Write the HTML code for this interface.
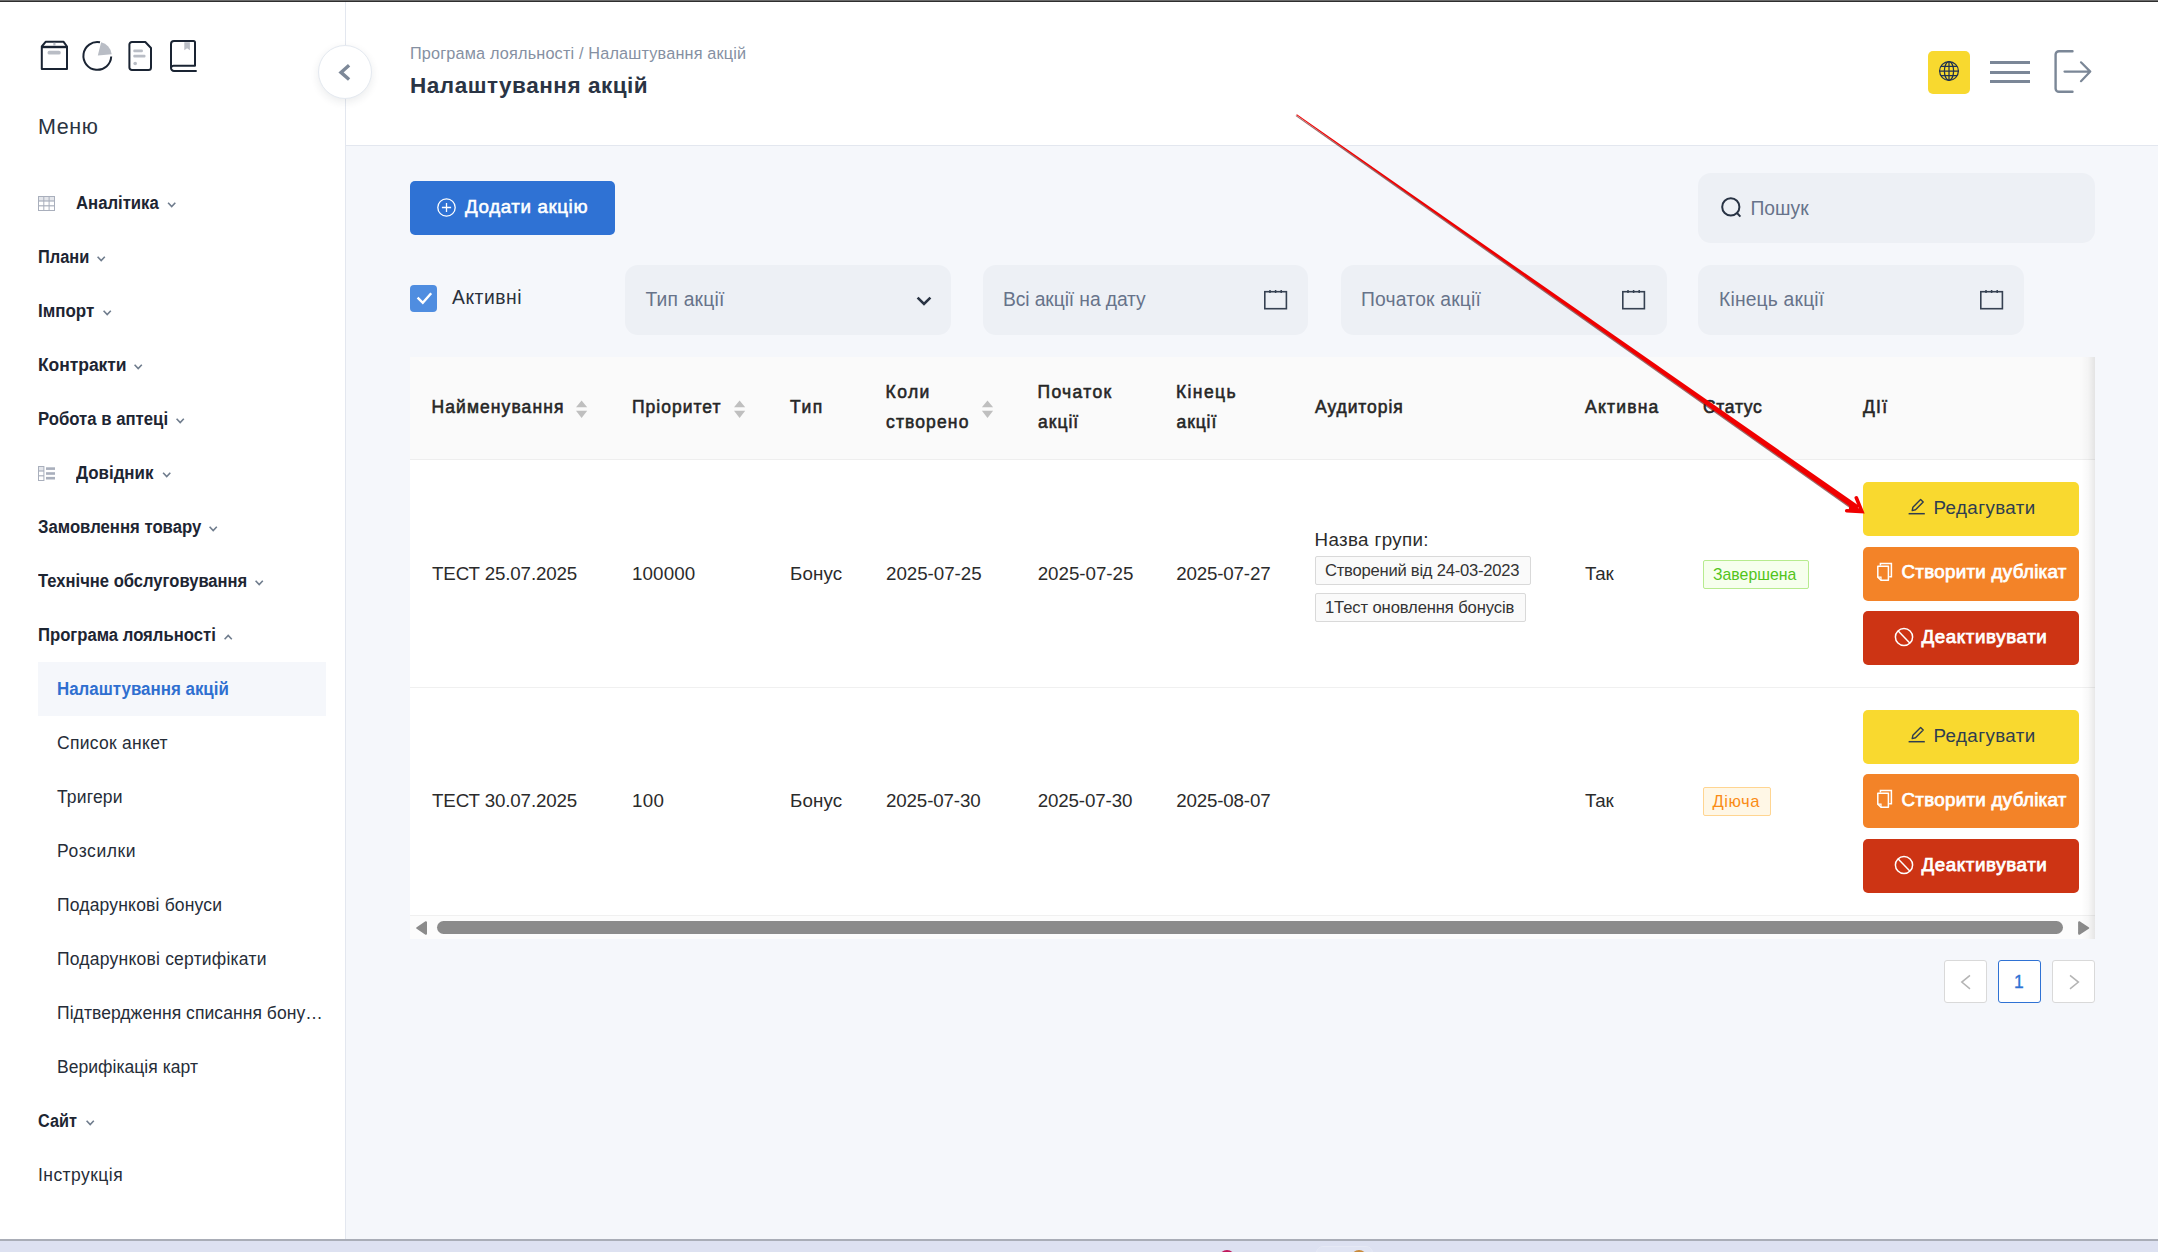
<!DOCTYPE html>
<html lang="uk">
<head>
<meta charset="utf-8">
<title>Налаштування акцій</title>
<style>
*{box-sizing:border-box;margin:0;padding:0}
html,body{width:2158px;height:1252px;overflow:hidden;background:#f5f7fb;font-family:"Liberation Sans","DejaVu Sans",sans-serif;color:#1f2733}
body{position:relative}
.abs{position:absolute}
.t{position:absolute;white-space:nowrap;line-height:1}
#topline{left:0;top:0;width:2158px;height:2px;background:linear-gradient(#6a6a6a 0,#6a6a6a 50%,#2e2e2e 50%,#2e2e2e 100%)}
#sidebar{left:0;top:2px;width:346px;height:1237px;background:#fff;border-right:1px solid #e3e7ef}
#header{left:346px;top:2px;width:1812px;height:144px;background:#fff;border-bottom:1px solid #e3e7ef}
#taskbar{left:0;top:1239px;width:2158px;height:13px;background:#dde1f1;border-top:2px solid #a9adb7;overflow:hidden}
.m{font-weight:bold;font-size:17px;color:#1f2733}
.s{font-size:17px;color:#2a313c}
#active{left:38px;top:662px;width:288px;height:54px;background:#f5f7fb}
.btn{position:absolute;border-radius:5px}
.fld{position:absolute;background:#edf0f5;border-radius:13px}
.ph{font-size:18px;color:#68717f}
#table{left:410px;top:357px;width:1685px;height:581.7px;background:#fff}
#thead{left:0;top:0;width:1685px;height:103px;background:#fafafa;border-bottom:1px solid #eeeeee}
.th{font-weight:bold;font-size:17px;color:#222a35}
.td{font-size:18px;color:#2a2f36}
.tag{position:absolute;border:1px solid #d9d9d9;background:#fafafa;border-radius:2px;height:28px}
.tag span{position:absolute;left:10px;top:5px;font-size:15px;white-space:nowrap;line-height:1;color:#33383f}
.pg{position:absolute;width:43px;height:43px;top:960px;background:#fff;border:1px solid #d9d9d9;border-radius:3px}
</style>
</head>
<body>
<div class="abs" id="sidebar"></div>
<div class="abs" id="header"></div>
<div class="abs" id="topline"></div>
<div class="abs" id="taskbar"><div class="abs" style="left:1316px;top:4.5px;width:57px;height:30px;border-radius:7px;border:1px solid #e6e9f5;background:#e0e4f3"></div><div class="abs" style="left:1219px;top:8.6px;width:16px;height:16px;border-radius:50%;background:#c2185b"></div><div class="abs" style="left:1351px;top:8.6px;width:16px;height:16px;border-radius:50%;background:#c98a3a"></div></div>

<!-- SIDEBAR -->
<div id="sb">
<div class="abs" id="active"></div>
</div>

<!-- HEADER -->
<div id="hd">
</div>

<!-- TOOLBAR -->
<div id="tb">
<div class="btn" style="left:410px;top:181px;width:205px;height:54px;background:#2f72d4"></div>
<div class="fld" style="left:1698px;top:173px;width:397px;height:70px"></div>
<div class="fld" style="left:625px;top:265px;width:325.5px;height:70px"></div>
<div class="fld" style="left:983px;top:265px;width:325px;height:70px"></div>
<div class="fld" style="left:1341px;top:265px;width:325.5px;height:70px"></div>
<div class="fld" style="left:1698px;top:265px;width:326px;height:70px"></div>
</div>

<!-- TABLE -->
<div class="abs" id="table">
<div class="abs" id="thead"></div>
</div>


<!-- SIDEBAR ICONS -->
<svg class="abs" style="left:36px;top:36px" width="170" height="42" viewBox="36 36 170 42" fill="none">
 <!-- box -->
 <g stroke="#1a2433" stroke-width="2" stroke-linejoin="round">
  <path d="M41.8 46.5 L45.6 41.8 H63.6 L67 46.5 V69 H41.8 Z"/>
  <path d="M41.8 47 H67" stroke-width="2.4"/>
 </g>
 <rect x="47.5" y="50.8" width="13.3" height="3.8" rx="1.9" fill="#b9bdc5"/>
 <rect x="53.3" y="42.8" width="2.2" height="3.2" fill="#b9bdc5"/>
 <!-- pie -->
 <path d="M100 42.3 A13.9 13.9 0 1 0 111.2 56.5" stroke="#1a2433" stroke-width="2" stroke-linecap="butt"/>
 <path d="M97.8 55.6 L101.1 42.3 A14 14 0 0 1 111.7 54.2 Z" fill="#b9bdc5"/>
 <!-- doc -->
 <path d="M132 42 H145.3 L151 48 V67.5 A2.5 2.5 0 0 1 148.5 70 H132 A2.5 2.5 0 0 1 129.4 67.5 V44.5 A2.5 2.5 0 0 1 132 42 Z" stroke="#1a2433" stroke-width="2" stroke-linejoin="round"/>
 <rect x="133.3" y="49.6" width="9.6" height="2.6" rx="1" fill="#b9bdc5"/>
 <rect x="133.3" y="54.8" width="12.2" height="2.6" rx="1" fill="#b9bdc5"/>
 <circle cx="135.2" cy="63.5" r="1.8" fill="#b9bdc5"/>
 <!-- book -->
 <path d="M196.7 70.9 H174 A3 3 0 0 1 171 67.9 V44 A3 3 0 0 1 174 41 H193.5 A1.5 1.5 0 0 1 195 42.5 V65.8 H174 A2.6 2.6 0 0 0 171 68" stroke="#1a2433" stroke-width="2" stroke-linejoin="round"/>
 <path d="M184.3 42.3 H189.9 V50.3 L187.1 48.3 L184.3 50.3 Z" fill="#b9bdc5"/>
</svg>

<!-- menu small icons -->
<svg class="abs" style="left:38px;top:196px" width="17" height="15" viewBox="0 0 17 15">
 <rect x="0" y="0" width="17" height="15" fill="#a9afbc"/>
 <g fill="#e4e6eb"><rect x="1" y="1" width="4.3" height="3.4"/><rect x="6.3" y="1" width="4.3" height="3.4"/><rect x="11.6" y="1" width="4.4" height="3.4"/></g>
 <g fill="#fff"><rect x="1" y="5.6" width="4.3" height="3.6"/><rect x="6.3" y="5.6" width="4.3" height="3.6"/><rect x="11.6" y="5.6" width="4.4" height="3.6"/>
 <rect x="1" y="10.4" width="4.3" height="3.6"/><rect x="6.3" y="10.4" width="4.3" height="3.6"/><rect x="11.6" y="10.4" width="4.4" height="3.6"/></g>
</svg>
<svg class="abs" style="left:38px;top:466px" width="17" height="15" viewBox="0 0 17 15">
 <rect x="0" y="0" width="6.4" height="15" fill="#a9afbc"/>
 <rect x="1" y="1" width="4.4" height="3.4" fill="#e4e6eb"/>
 <rect x="1" y="5.6" width="4.4" height="3.6" fill="#fff"/>
 <rect x="1" y="10.4" width="4.4" height="3.6" fill="#fff"/>
 <g fill="#a9afbc"><rect x="8" y="1.3" width="9" height="2.6"/><rect x="8" y="6.2" width="9" height="2.6"/><rect x="8" y="10.9" width="9" height="2.6"/></g>
</svg>

<!-- collapse button -->
<div class="abs" style="left:318px;top:45px;width:54px;height:54px;border-radius:50%;background:#fff;border:1px solid #e4e9f0;box-shadow:0 3px 8px rgba(30,40,60,.09)"></div>
<svg class="abs" style="left:336px;top:62px" width="18" height="20" viewBox="336 62 18 20" fill="none"><path d="M349.1 65.3 L341 72.4 L349.1 79.5" stroke="#7d8898" stroke-width="3.4"/></svg>

<!-- header right -->
<div class="abs" style="left:1928px;top:51px;width:42px;height:43px;border-radius:5px;background:#f8d92f"></div>
<svg class="abs" style="left:1938px;top:60px" width="22" height="22" viewBox="-11 -11 22 22" fill="none" stroke="#1f3150" stroke-width="1.25">
 <circle r="9.4"/><ellipse rx="4.6" ry="9.4"/><path d="M0 -9.4 V9.4 M-9.4 0 H9.4 M-8.1 -4.7 H8.1 M-8.1 4.7 H8.1"/>
</svg>
<div class="abs" style="left:1990px;top:61px;width:40px;height:3px;background:#7b8797"></div>
<div class="abs" style="left:1990px;top:71px;width:40px;height:3px;background:#7b8797"></div>
<div class="abs" style="left:1990px;top:80px;width:40px;height:3px;background:#7b8797"></div>
<svg class="abs" style="left:2050px;top:46px" width="46" height="52" viewBox="2050 46 46 52" fill="none" stroke="#7b8797" stroke-width="2.4" stroke-linecap="round" stroke-linejoin="round">
 <path d="M2072.5 51.2 H2059 A3.4 3.4 0 0 0 2055.6 54.6 V88.4 A3.4 3.4 0 0 0 2059 91.8 H2072.5"/>
 <path d="M2064.5 71.6 H2090 M2081 62.3 L2090.3 71.6 L2081 81.2" stroke-width="2.2"/>
</svg>


<svg class="abs" style="left:0;top:0" width="346" height="1252" viewBox="0 0 346 1252" fill="none" stroke="#6f7c8d" stroke-width="1.6"><path d="M168.1 202.8 L171.7 206.6 L175.3 202.8"/><path d="M97.6 256.8 L101.2 260.6 L104.8 256.8"/><path d="M103.6 310.8 L107.2 314.6 L110.8 310.8"/><path d="M134.6 364.8 L138.2 368.6 L141.8 364.8"/><path d="M176.6 418.8 L180.2 422.6 L183.8 418.8"/><path d="M163.1 472.8 L166.7 476.6 L170.3 472.8"/><path d="M209.6 526.8 L213.2 530.6 L216.8 526.8"/><path d="M255.6 580.8 L259.2 584.6 L262.8 580.8"/><path d="M224.6 639.2 L228.2 635.4 L231.8 639.2"/><path d="M86.6 1120.8 L90.2 1124.6 L93.8 1120.8"/></svg>

<!-- toolbar icons -->
<svg class="abs" style="left:436px;top:197px" width="21" height="21" viewBox="-10.5 -10.5 21 21" fill="none" stroke="#fff" stroke-width="1.3"><circle r="8.7"/><path d="M-4.6 0 H4.6 M0 -4.6 V4.6"/></svg>
<svg class="abs" style="left:1719px;top:195px" width="24" height="24" viewBox="1719 195 24 24" fill="none" stroke="#283344" stroke-width="2"><circle cx="1730.8" cy="206.9" r="8.6"/><path d="M1737 213 L1740.4 216.6"/></svg>
<div class="abs" style="left:410px;top:284.5px;width:27px;height:27px;border-radius:4px;background:#4f8de0"></div>
<svg class="abs" style="left:410px;top:284px" width="28" height="28" viewBox="410 284 28 28" fill="none" stroke="#fff" stroke-width="2.4"><path d="M417.6 297.6 L422.8 302.8 L431.2 293.2"/></svg>
<svg class="abs" style="left:915px;top:294px" width="18" height="14" viewBox="915 294 18 14" fill="none" stroke="#2a3444" stroke-width="2.6"><path d="M917.6 297.6 L924 304 L930.4 297.6"/></svg>
<svg class="abs" style="left:1262px;top:288px" width="28" height="24" viewBox="1262 288 28 24" fill="none" stroke="#364152"><rect x="1264.8" y="291.7" width="21.6" height="17" stroke-width="1.6"/><path d="M1270 290 V293 M1275.6 290 V293 M1281.2 290 V293" stroke-width="1.5"/></svg>
<svg class="abs" style="left:1620px;top:288px" width="28" height="24" viewBox="1620 288 28 24" fill="none" stroke="#364152"><rect x="1622.8" y="291.7" width="21.6" height="17" stroke-width="1.6"/><path d="M1628 290 V293 M1633.6 290 V293 M1639.2 290 V293" stroke-width="1.5"/></svg>
<svg class="abs" style="left:1978px;top:288px" width="28" height="24" viewBox="1978 288 28 24" fill="none" stroke="#364152"><rect x="1980.8" y="291.7" width="21.6" height="17" stroke-width="1.6"/><path d="M1986 290 V293 M1991.6 290 V293 M1997.2 290 V293" stroke-width="1.5"/></svg>


<!-- TABLE CONTENT -->
<div id="tc">
<svg class="abs" style="left:560px;top:395px" width="440" height="26" viewBox="560 395 440 26" fill="#bfbfbf"><path d="M576.0 407.3 L581.6 400.6 L587.2 407.3 Z M576.0 410.8 L581.6 417.9 L587.2 410.8 Z"/><path d="M734.0 407.3 L739.6 400.6 L745.2 407.3 Z M734.0 410.8 L739.6 417.9 L745.2 410.8 Z"/><path d="M981.9 407.3 L987.5 400.6 L993.1 407.3 Z M981.9 410.8 L987.5 417.9 L993.1 410.8 Z"/></svg>
<div class="abs" style="left:410px;top:687px;width:1685px;height:1px;background:#f0f0f0"></div>
<div class="abs" style="left:410px;top:915px;width:1685px;height:1px;background:#f0f0f0"></div>
<div class="tag" style="left:1315px;top:556px;width:216px;height:28.5px"></div>
<div class="tag" style="left:1315px;top:593px;width:211px;height:28.5px"></div>
<div class="tag" style="left:1703px;top:560px;width:106px;height:29px;border-color:#b7eb8f;background:#f6ffed"></div>
<div class="tag" style="left:1703px;top:787px;width:68px;height:29px;border-color:#ffd591;background:#fff7e6"></div>
<div class="btn" style="left:1863px;top:482px;width:216px;height:54px;background:#f9d92f"></div>
<div class="btn" style="left:1863px;top:547px;width:216px;height:54px;background:#f38328"></div>
<div class="btn" style="left:1863px;top:611px;width:216px;height:54px;background:#cd3414"></div>
<svg class="abs" style="left:1906px;top:496px" width="22" height="22" viewBox="0 0 22 22" fill="none" stroke="#2f3d4f" stroke-width="1.5"><path d="M2.6 17.7 H18.8"/><path d="M6.2 14.6 L6.9 11.2 L14.6 3.4 L17.2 6 L9.5 13.8 Z" stroke-linejoin="round" stroke-width="1.4"/></svg>
<svg class="abs" style="left:1875px;top:561px" width="20" height="22" viewBox="0 0 20 22" fill="none" stroke="#fff" stroke-width="1.5"><path d="M5.4 4.4 V2.6 H16.4 V15.8 H14.2"/><path d="M2.8 5.2 H13.4 V19.2 H6 L2.8 16.2 Z" stroke-linejoin="round"/><path d="M2.8 16.2 H6 V19.2" stroke-width="1.2"/></svg>
<svg class="abs" style="left:1893px;top:625.7px" width="22" height="22" viewBox="-11 -11 22 22" fill="none" stroke="#fff" stroke-width="1.5"><circle r="8.6"/><path d="M-6 -6.2 L6 6.2"/></svg>
<div class="btn" style="left:1863px;top:710px;width:216px;height:54px;background:#f9d92f"></div>
<div class="btn" style="left:1863px;top:774px;width:216px;height:54px;background:#f38328"></div>
<div class="btn" style="left:1863px;top:839px;width:216px;height:54px;background:#cd3414"></div>
<svg class="abs" style="left:1906px;top:724px" width="22" height="22" viewBox="0 0 22 22" fill="none" stroke="#2f3d4f" stroke-width="1.5"><path d="M2.6 17.7 H18.8"/><path d="M6.2 14.6 L6.9 11.2 L14.6 3.4 L17.2 6 L9.5 13.8 Z" stroke-linejoin="round" stroke-width="1.4"/></svg>
<svg class="abs" style="left:1875px;top:788.3px" width="20" height="22" viewBox="0 0 20 22" fill="none" stroke="#fff" stroke-width="1.5"><path d="M5.4 4.4 V2.6 H16.4 V15.8 H14.2"/><path d="M2.8 5.2 H13.4 V19.2 H6 L2.8 16.2 Z" stroke-linejoin="round"/><path d="M2.8 16.2 H6 V19.2" stroke-width="1.2"/></svg>
<svg class="abs" style="left:1893px;top:853.7px" width="22" height="22" viewBox="-11 -11 22 22" fill="none" stroke="#fff" stroke-width="1.5"><circle r="8.6"/><path d="M-6 -6.2 L6 6.2"/></svg>
<div class="abs" style="left:410px;top:916px;width:1685px;height:22.7px;background:#fcfcfc"></div>
<div class="abs" style="left:437px;top:921px;width:1626px;height:13px;border-radius:6.5px;background:#8b8b8b"></div>
<svg class="abs" style="left:410px;top:915px" width="1684" height="24" viewBox="410 915 1684 24" fill="#8b8b8b" stroke="#8b8b8b" stroke-width="2" stroke-linejoin="round"><path d="M426 922.2 V933.8 L417.2 928 Z M2079.1 922.2 V933.8 L2088.2 928 Z"/></svg>
<div class="abs" style="left:2081px;top:357px;width:14px;height:581.7px;background:linear-gradient(to right,rgba(0,0,0,0),rgba(0,0,0,.025) 50%,rgba(0,0,0,.09))"></div>
<!-- pagination -->
<div class="pg" style="left:1944px"></div>
<div class="pg" style="left:1998px;border-color:#2f72d4"></div>
<div class="pg" style="left:2052px"></div>
<svg class="abs" style="left:1944px;top:960px" width="151" height="43" viewBox="1944 960 151 43" fill="none" stroke="#b4b4b4" stroke-width="1.5"><path d="M1970 975.4 L1961.8 982.1 L1970 988.8"/><path d="M2070 975.4 L2078.4 982.1 L2070 988.8"/></svg>
</div>
<!-- ARROW -->
<svg id="arrow" class="abs" style="left:1280px;top:100px;z-index:5" width="600" height="430" viewBox="1280 100 600 430">
 <polygon points="1296.9,114.3 1296.3,115.1 1855.5,510.6 1858.9,505.8" fill="#5a0a0a" opacity=".6" transform="translate(-0.7,1.0)"/>
 <polygon points="1296.9,114.3 1296.3,115.1 1855.5,510.6 1858.9,505.8" fill="#f00000"/>
 <path d="M1856.3 497.8 L1861.9 511.5 L1846.7 510.8" fill="none" stroke="#f00000" stroke-width="3.6" stroke-linecap="round" stroke-linejoin="miter"/>
 <polygon points="1850.2,500.4 1862.3,511.7 1848.7,510.0" fill="#f00000"/>
</svg>

<div id="texts">
<div class="t" id="menu" style="left:38.00px;top:117.10px;font-size:21.5px;color:#2a3340;letter-spacing:0.567px;">Меню</div>
<div class="t" id="m1" style="left:76.00px;top:194.69px;font-size:17.5px;color:#1d2532;font-weight:bold;transform:scaleX(0.9540);transform-origin:0 0;">Аналітика</div>
<div class="t" id="m2" style="left:38.00px;top:248.69px;font-size:17.5px;color:#1d2532;font-weight:bold;transform:scaleX(0.9372);transform-origin:0 0;">Плани</div>
<div class="t" id="m3" style="left:38.00px;top:302.69px;font-size:17.5px;color:#1d2532;font-weight:bold;transform:scaleX(0.9691);transform-origin:0 0;">Імпорт</div>
<div class="t" id="m4" style="left:38.00px;top:356.69px;font-size:17.5px;color:#1d2532;font-weight:bold;letter-spacing:-0.062px;">Контракти</div>
<div class="t" id="m5" style="left:38.00px;top:410.69px;font-size:17.5px;color:#1d2532;font-weight:bold;transform:scaleX(0.9563);transform-origin:0 0;">Робота в аптеці</div>
<div class="t" id="m6" style="left:76.00px;top:464.69px;font-size:17.5px;color:#1d2532;font-weight:bold;transform:scaleX(0.9655);transform-origin:0 0;">Довідник</div>
<div class="t" id="m7" style="left:38.00px;top:518.69px;font-size:17.5px;color:#1d2532;font-weight:bold;transform:scaleX(0.9550);transform-origin:0 0;">Замовлення товару</div>
<div class="t" id="m8" style="left:38.00px;top:572.69px;font-size:17.5px;color:#1d2532;font-weight:bold;transform:scaleX(0.9477);transform-origin:0 0;">Технічне обслуговування</div>
<div class="t" id="m9" style="left:38.00px;top:626.69px;font-size:17.5px;color:#1d2532;font-weight:bold;transform:scaleX(0.9527);transform-origin:0 0;">Програма лояльності</div>
<div class="t" id="s1" style="left:57.00px;top:680.69px;font-size:17.5px;color:#2f6fd0;font-weight:bold;transform:scaleX(0.9661);transform-origin:0 0;">Налаштування акцій</div>
<div class="t" id="s2" style="left:57.00px;top:734.69px;font-size:17.5px;color:#262d38;letter-spacing:0.282px;">Список анкет</div>
<div class="t" id="s3" style="left:57.00px;top:788.69px;font-size:17.5px;color:#262d38;letter-spacing:0.167px;">Тригери</div>
<div class="t" id="s4" style="left:57.00px;top:842.69px;font-size:17.5px;color:#262d38;letter-spacing:0.600px;">Розсилки</div>
<div class="t" id="s5" style="left:57.00px;top:896.69px;font-size:17.5px;color:#262d38;letter-spacing:0.182px;">Подарункові бонуси</div>
<div class="t" id="s6" style="left:57.00px;top:950.69px;font-size:17.5px;color:#262d38;letter-spacing:0.223px;">Подарункові сертифікати</div>
<div class="t" id="s7" style="left:57.00px;top:1004.69px;font-size:17.5px;color:#262d38;letter-spacing:0.067px;">Підтвердження списання бону…</div>
<div class="t" id="s8" style="left:57.00px;top:1058.69px;font-size:17.5px;color:#262d38;letter-spacing:0.040px;">Верифікація карт</div>
<div class="t" id="m10" style="left:38.00px;top:1112.69px;font-size:17.5px;color:#1d2532;font-weight:bold;transform:scaleX(0.9264);transform-origin:0 0;">Сайт</div>
<div class="t" id="s9" style="left:38.00px;top:1166.69px;font-size:17.5px;color:#262d38;letter-spacing:0.444px;">Інструкція</div>
<div class="t" id="bc" style="left:410.00px;top:44.74px;font-size:16.25px;color:#8590a2;letter-spacing:0.167px;">Програма лояльності / Налаштування акцій</div>
<div class="t" id="title" style="left:410.00px;top:74.85px;font-size:22.5px;color:#2a3444;font-weight:bold;letter-spacing:0.529px;">Налаштування акцій</div>
<div class="t" id="add" style="left:465.00px;top:197.63px;font-size:18.75px;color:#fff;-webkit-text-stroke:0.55px #fff;letter-spacing:0.609px;">Додати акцію</div>
<div class="t" id="search" style="left:1750.50px;top:199.16px;font-size:19.3px;color:#67738a;">Пошук</div>
<div class="t" id="act" style="left:452.00px;top:288.36px;font-size:19.3px;color:#2a313c;letter-spacing:0.533px;">Активні</div>
<div class="t" id="f1" style="left:645.50px;top:289.86px;font-size:19.3px;color:#67738a;letter-spacing:0.175px;">Тип акції</div>
<div class="t" id="f2" style="left:1003.00px;top:289.86px;font-size:19.3px;color:#67738a;letter-spacing:-0.100px;">Всі акції на дату</div>
<div class="t" id="f3" style="left:1361.00px;top:289.86px;font-size:19.3px;color:#67738a;letter-spacing:0.208px;">Початок акції</div>
<div class="t" id="f4" style="left:1719.00px;top:289.86px;font-size:19.3px;color:#67738a;letter-spacing:0.182px;">Кінець акції</div>
<div class="t" id="h1" style="left:431.50px;top:399.49px;font-size:17.5px;color:#262626;-webkit-text-stroke:0.55px #262626;letter-spacing:1.082px;">Найменування</div>
<div class="t" id="h2" style="left:632.00px;top:399.49px;font-size:17.5px;color:#262626;-webkit-text-stroke:0.55px #262626;letter-spacing:1.013px;">Пріоритет</div>
<div class="t" id="h3" style="left:790.00px;top:399.49px;font-size:17.5px;color:#262626;-webkit-text-stroke:0.55px #262626;letter-spacing:1.500px;">Тип</div>
<div class="t" id="h4a" style="left:885.50px;top:383.69px;font-size:17.5px;color:#262626;-webkit-text-stroke:0.55px #262626;letter-spacing:1.433px;">Коли</div>
<div class="t" id="h4b" style="left:886.00px;top:414.39px;font-size:17.5px;color:#262626;-webkit-text-stroke:0.55px #262626;letter-spacing:1.129px;">створено</div>
<div class="t" id="h5a" style="left:1037.50px;top:383.69px;font-size:17.5px;color:#262626;-webkit-text-stroke:0.55px #262626;letter-spacing:1.333px;">Початок</div>
<div class="t" id="h5b" style="left:1038.00px;top:414.39px;font-size:17.5px;color:#262626;-webkit-text-stroke:0.55px #262626;letter-spacing:1.000px;">акції</div>
<div class="t" id="h6a" style="left:1176.00px;top:383.69px;font-size:17.5px;color:#262626;-webkit-text-stroke:0.55px #262626;letter-spacing:1.380px;">Кінець</div>
<div class="t" id="h6b" style="left:1176.50px;top:414.39px;font-size:17.5px;color:#262626;-webkit-text-stroke:0.55px #262626;letter-spacing:0.900px;">акції</div>
<div class="t" id="h7" style="left:1315.00px;top:399.49px;font-size:17.5px;color:#262626;-webkit-text-stroke:0.55px #262626;letter-spacing:0.925px;">Аудиторія</div>
<div class="t" id="h8" style="left:1585.00px;top:399.49px;font-size:17.5px;color:#262626;-webkit-text-stroke:0.55px #262626;letter-spacing:1.217px;">Активна</div>
<div class="t" id="h9" style="left:1703.00px;top:399.49px;font-size:17.5px;color:#262626;-webkit-text-stroke:0.55px #262626;letter-spacing:0.700px;">Статус</div>
<div class="t" id="h10" style="left:1863.00px;top:399.49px;font-size:17.5px;color:#262626;-webkit-text-stroke:0.55px #262626;letter-spacing:1.250px;">ДІї</div>
<div class="t" id="grp" style="left:1314.50px;top:531.38px;font-size:18.75px;color:#2b2b2b;letter-spacing:0.364px;">Назва групи:</div>
<div class="t" id="tag1" style="left:1325.00px;top:563.20px;font-size:16.6px;color:#333;letter-spacing:-0.239px;">Створений від 24-03-2023</div>
<div class="t" id="tag2" style="left:1325.00px;top:600.45px;font-size:16.6px;color:#333;letter-spacing:-0.114px;">1Тест оновлення бонусів</div>
<div class="t" id="st1" style="left:1712.50px;top:567.45px;font-size:16.6px;color:#52c41a;transform:scaleX(0.9544);transform-origin:0 0;">Завершена</div>
<div class="t" id="st2" style="left:1712.50px;top:793.65px;font-size:16.6px;color:#fa8c16;letter-spacing:0.500px;">Діюча</div>
<div class="t" id="pg1" style="left:2014.10px;top:973.69px;font-size:17.5px;color:#2f72d4;-webkit-text-stroke:0.3px #2f72d4;">1</div>
<div class="t" id="r0a" style="left:432.00px;top:565.43px;font-size:18.75px;color:#2b2b2b;letter-spacing:-0.157px;">ТЕСТ 25.07.2025</div>
<div class="t" id="r0b" style="left:632.00px;top:565.43px;font-size:18.75px;color:#2b2b2b;letter-spacing:0.120px;">100000</div>
<div class="t" id="r0c" style="left:790.00px;top:565.43px;font-size:18.75px;color:#2b2b2b;letter-spacing:0.150px;">Бонус</div>
<div class="t" id="r0d" style="left:886.00px;top:565.43px;font-size:18.75px;color:#2b2b2b;letter-spacing:-0.033px;">2025-07-25</div>
<div class="t" id="r0e" style="left:1037.70px;top:565.43px;font-size:18.75px;color:#2b2b2b;letter-spacing:-0.022px;">2025-07-25</div>
<div class="t" id="r0f" style="left:1176.30px;top:565.43px;font-size:18.75px;color:#2b2b2b;letter-spacing:-0.178px;">2025-07-27</div>
<div class="t" id="r0g" style="left:1585.00px;top:564.63px;font-size:18.75px;color:#2b2b2b;letter-spacing:-0.250px;">Так</div>
<div class="t" id="r0b1" style="left:1933.50px;top:499.43px;font-size:18.75px;color:#2f3d4f;letter-spacing:0.400px;">Редагувати</div>
<div class="t" id="r0b2" style="left:1901.50px;top:562.53px;font-size:18.75px;color:#fff;-webkit-text-stroke:0.75px #fff;letter-spacing:0.294px;">Створити дублікат</div>
<div class="t" id="r0b3" style="left:1921.50px;top:627.63px;font-size:18.75px;color:#fff;-webkit-text-stroke:0.75px #fff;letter-spacing:0.591px;">Деактивувати</div>
<div class="t" id="r1a" style="left:432.00px;top:791.83px;font-size:18.75px;color:#2b2b2b;letter-spacing:-0.157px;">ТЕСТ 30.07.2025</div>
<div class="t" id="r1b" style="left:632.00px;top:791.83px;font-size:18.75px;color:#2b2b2b;letter-spacing:0.350px;">100</div>
<div class="t" id="r1c" style="left:790.00px;top:791.83px;font-size:18.75px;color:#2b2b2b;letter-spacing:0.150px;">Бонус</div>
<div class="t" id="r1d" style="left:886.00px;top:791.83px;font-size:18.75px;color:#2b2b2b;letter-spacing:-0.144px;">2025-07-30</div>
<div class="t" id="r1e" style="left:1037.70px;top:791.83px;font-size:18.75px;color:#2b2b2b;letter-spacing:-0.133px;">2025-07-30</div>
<div class="t" id="r1f" style="left:1176.30px;top:791.83px;font-size:18.75px;color:#2b2b2b;letter-spacing:-0.178px;">2025-08-07</div>
<div class="t" id="r1g" style="left:1585.00px;top:792.03px;font-size:18.75px;color:#2b2b2b;letter-spacing:-0.250px;">Так</div>
<div class="t" id="r1b1" style="left:1933.50px;top:727.13px;font-size:18.75px;color:#2f3d4f;letter-spacing:0.400px;">Редагувати</div>
<div class="t" id="r1b2" style="left:1901.50px;top:791.23px;font-size:18.75px;color:#fff;-webkit-text-stroke:0.75px #fff;letter-spacing:0.294px;">Створити дублікат</div>
<div class="t" id="r1b3" style="left:1921.50px;top:856.33px;font-size:18.75px;color:#fff;-webkit-text-stroke:0.75px #fff;letter-spacing:0.591px;">Деактивувати</div>
</div>
</body>
</html>
